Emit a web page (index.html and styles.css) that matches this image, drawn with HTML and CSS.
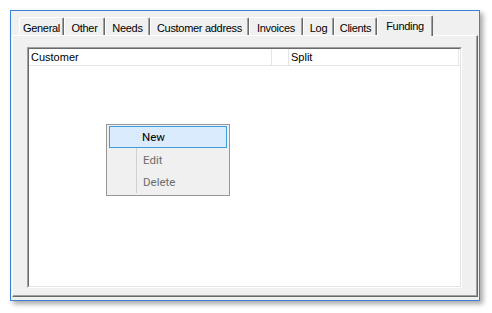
FILE: index.html
```html
<!DOCTYPE html>
<html>
<head>
<meta charset="utf-8">
<link rel="stylesheet" href="styles.css">
</head>
<body>
<div class="window">
  <div class="tabs">
    <div class="tab t-general">General</div>
    <div class="tab t-other">Other</div>
    <div class="tab t-needs">Needs</div>
    <div class="tab t-address">Customer address</div>
    <div class="tab t-invoices">Invoices</div>
    <div class="tab t-log">Log</div>
    <div class="tab t-clients">Clients</div>
    <div class="tab tab-active t-funding">Funding</div>
  </div>
  <div class="panel">
    <div class="list-outer">
      <div class="list-inner">
        <div class="list-header">
          <div class="col col-customer">Customer</div>
          <div class="col col-blank"></div>
          <div class="col col-split">Split</div>
        </div>
      </div>
    </div>
  </div>
</div>
<div class="menu">
  <div class="menu-item is-hover">New</div>
  <div class="menu-item is-disabled">Edit</div>
  <div class="menu-item is-disabled">Delete</div>
</div>
</body>
</html>
```
FILE: styles.css
```css
* { box-sizing: border-box; }
html, body { margin: 0; padding: 0; background: #ffffff; }
body { width: 492px; height: 313px; overflow: hidden; position: relative; }

.window {
  margin: 10px 0 0 10px;
  width: 470px;
  height: 291px;
  border: 1px solid #3c7fdc;
  background: #f0f0f0;
  box-shadow: 3px 3px 5px rgba(0,0,0,0.35);
  padding: 0 1px;
  display: flex;
  flex-direction: column;
}

.tabs {
  height: 24px;
  display: flex;
  align-items: flex-end;
  padding-left: 7px;
  font-family: "Liberation Sans", Arial, sans-serif;
  font-size: 11px;
  letter-spacing: -0.3px;
  color: #000;
}
.tab {
  height: 18px;
  background: #f0f0f0;
  border-top: 1px solid #ffffff;
  border-left: 1px solid #ffffff;
  border-right: 1px solid #696969;
  box-shadow: inset -1px 0 0 #a0a0a0;
  border-top-left-radius: 2px;
  border-top-right-radius: 2px;
  text-align: center;
  line-height: 14px;
  padding-top: 3px;
  white-space: nowrap;
}
.tab-active {
  height: 21px;
  margin-bottom: -1px;
  position: relative;
  z-index: 1;
  padding-top: 3px;
}
.t-general { width: 45px; }
.t-other { width: 41px; }
.t-needs { width: 45px; }
.t-address { width: 99px; }
.t-invoices { width: 54px; }
.t-log { width: 31px; }
.t-clients { width: 43px; }
.t-funding { width: 56px; }

.panel {
  height: 262px;
  width: 466px;
  border-top: 1px solid #ffffff;
  border-left: 1px solid #ffffff;
  border-right: 1px solid #696969;
  border-bottom: 1px solid #696969;
  box-shadow: inset -1px -1px 0 #a0a0a0;
  padding: 11px 0 0 14px;
}

.list-outer {
  width: 435px;
  height: 241px;
  border: 1px solid;
  border-color: #a0a0a0 #ffffff #ffffff #a0a0a0;
}
.list-inner {
  height: 100%;
  border: 1px solid;
  border-color: #696969 #e3e3e3 #e3e3e3 #696969;
  background: #ffffff;
}
.list-header {
  display: flex;
  height: 17px;
  border-bottom: 1px solid #e5e5e5;
  font-family: "Liberation Sans", Arial, sans-serif;
  font-size: 11px;
  line-height: 16px;
  color: #000;
}
.col { border-right: 1px solid #e5e5e5; padding-left: 2px; }
.col-customer { width: 243px; }
.col-blank { width: 17px; }
.col-split { width: 170px; }

.menu {
  position: absolute;
  left: 106px;
  top: 124px;
  width: 124px;
  height: 72px;
  border: 1px solid #979797;
  background: #f0f0f0;
  padding: 1px;
  font-family: "Segoe UI", Roboto, "Noto Sans", sans-serif;
  font-size: 11.5px;
}
.menu::before {
  content: "";
  position: absolute;
  left: 29px;
  top: 23px;
  width: 1px;
  height: 45px;
  background: #d0d0d0;
}
.menu-item {
  height: 22px;
  margin: 0 1px;
  padding-left: 33px;
  line-height: 22px;
  border: 1px solid transparent;
  color: #000;
}
.menu-item.is-hover {
  background: #d9ebfc;
  border-color: #3a9fda;
  line-height: 20px;
  padding-left: 32px;
}
.menu-item.is-disabled { color: #6d6d6d; }
```
